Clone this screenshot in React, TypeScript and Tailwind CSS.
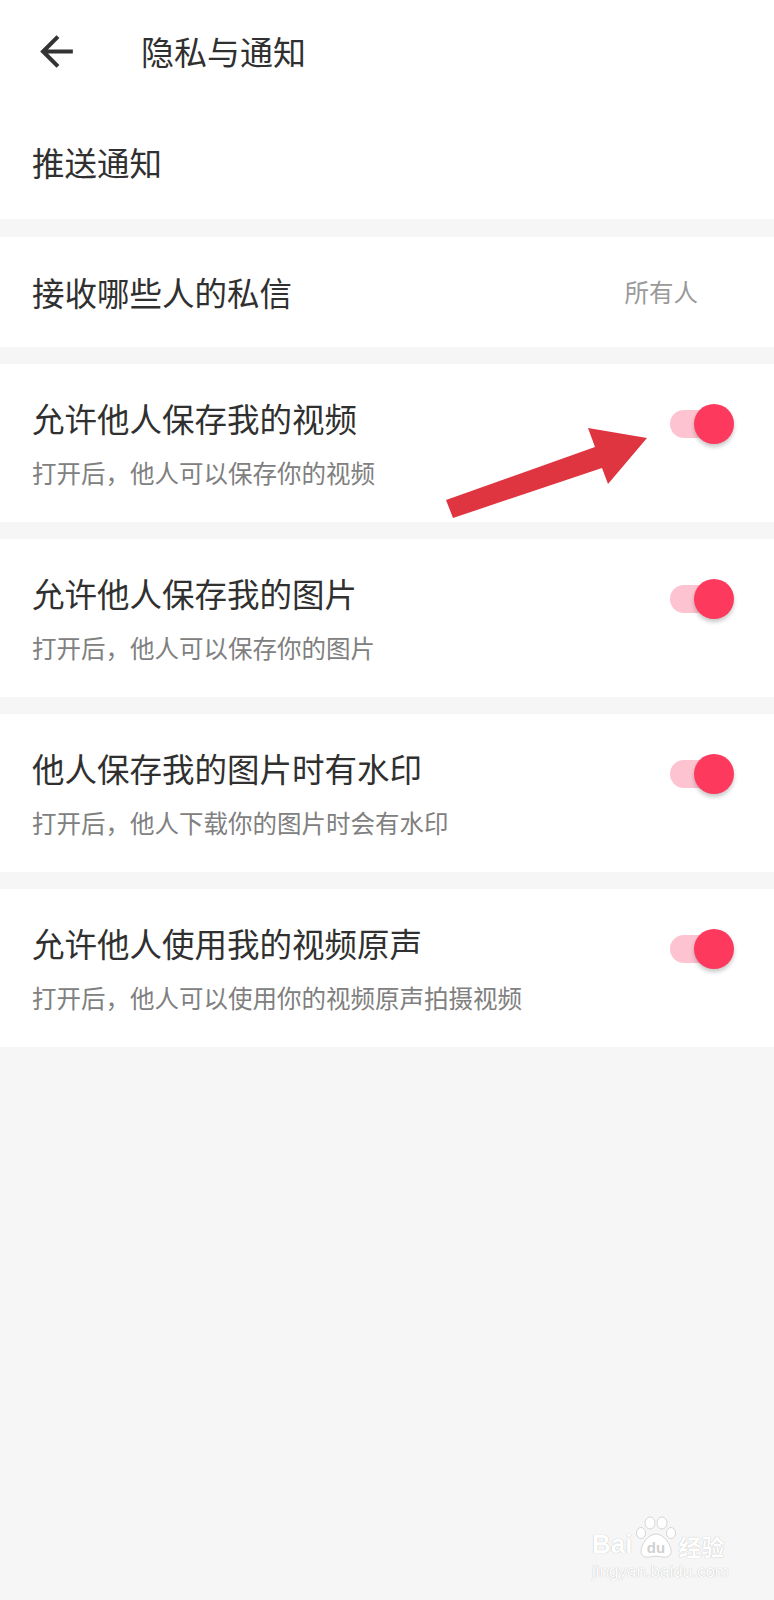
import React from 'react';

const font = { fontFamily: '"Noto Sans CJK SC", "Noto Sans", sans-serif' };
const latin = { fontFamily: '"Liberation Sans", Arial, sans-serif' };

const toggleRows = [
  { title: '允许他人保存我的视频', desc: '打开后，他人可以保存你的视频' },
  { title: '允许他人保存我的图片', desc: '打开后，他人可以保存你的图片' },
  { title: '他人保存我的图片时有水印', desc: '打开后，他人下载你的图片时会有水印' },
  { title: '允许他人使用我的视频原声', desc: '打开后，他人可以使用你的视频原声拍摄视频' },
];

const Toggle = () => (
  <div className="relative mt-[40px] mr-[40px] h-[40px] w-[64px] shrink-0">
    <div className="absolute left-0 top-[6px] h-[28px] w-[52px] rounded-full bg-[#fdc3d0]" />
    <div className="absolute right-0 top-0 h-[40px] w-[40px] rounded-full bg-[#fd3a5e] shadow-[0_3px_4px_rgba(0,0,0,0.22)]" />
  </div>
);

const Gap = ({ h }: { h: string }) => <div className={`${h} w-full`} />;

const App = () => {
  return (
    <div className="relative min-h-[1600px] w-full bg-[#f6f6f6]" style={font}>
      {/* header + push notifications */}
      <div className="bg-white">
        <div className="flex h-[102px] items-center">
          <svg className="ml-[32px]" width="49" height="49" viewBox="0 0 24 24" fill="#333">
            <path d="M20 11H7.83l5.59-5.59L12 4l-8 8 8 8 1.41-1.41L7.83 13H20v-2z" />
          </svg>
          <h1 className="ml-[60px] text-[33px] font-normal leading-[40px] text-[#303030]">隐私与通知</h1>
        </div>
        <div className="flex h-[117px] items-center pb-[2px] pl-[32px] pt-[4px]">
          <span className="text-[32.5px] leading-[40px] text-[#303030]">推送通知</span>
        </div>
      </div>

      <Gap h="h-[18px]" />

      <div className="flex h-[110px] items-center justify-between bg-white pl-[32px] pr-[76px]">
        <span className="text-[32.5px] leading-[40px] text-[#303030]">接收哪些人的私信</span>
        <span className="text-[24.5px] leading-[30px] text-[#9a9a9a]">所有人</span>
      </div>

      {toggleRows.map(row => (
        <div key={row.title}>
          <Gap h="h-[17px]" />
          <div className="flex h-[158px] justify-between bg-white">
            <div className="flex flex-col pl-[32px] pt-[34px]">
              <span className="text-[32.5px] leading-[40px] text-[#303030]">{row.title}</span>
              <span className="mt-[20px] text-[24.5px] leading-[30px] text-[#808080]">{row.desc}</span>
            </div>
            <Toggle />
          </div>
        </div>
      ))}

      {/* annotation arrow */}
      <svg className="pointer-events-none absolute left-0 top-0" width="774" height="600">
        <polygon
          points="446,500 595,447 588,428 647,438 608,484 602,468 453,518"
          fill="#df3540"
        />
      </svg>

      {/* watermark */}
      <div className="pointer-events-none absolute left-[592px] top-[1516px] flex flex-col items-start">
        <div className="flex items-end">
          <span
            className="mb-[5px] text-[26px] font-bold leading-[22px] text-white [text-shadow:0_0_1px_rgba(0,0,0,0.3)]"
            style={latin}
          >
            Bai
          </span>
          <svg width="44" height="44" viewBox="0 0 44 44" className="ml-[2px]">
            <g fill="#fff" stroke="#d6d6d6" strokeWidth="1">
              <ellipse cx="16" cy="7" rx="5" ry="6" />
              <ellipse cx="28" cy="7" rx="5" ry="6" />
              <ellipse cx="7" cy="17" rx="4.5" ry="5.5" />
              <ellipse cx="37" cy="17" rx="4.5" ry="5.5" />
              <path d="M22 18 C14 18 8 28 7 34 C6 40 12 42 16 41 C19 40 25 40 28 41 C33 42 38 40 37 34 C36 28 30 18 22 18 Z" />
            </g>
            <text x="22" y="37" textAnchor="middle" fontSize="15" fontWeight="bold" fill="#d0d0d0" style={latin}>
              du
            </text>
          </svg>
          <span className="mb-[2px] text-[23px] font-bold leading-[24px] text-white [text-shadow:0_0_1px_rgba(0,0,0,0.3)]">
            经验
          </span>
        </div>
        <span
          className="mt-[3px] text-[17px] leading-[18px] text-white [text-shadow:0_0_1px_rgba(0,0,0,0.3)]"
          style={latin}
        >
          jingyan.baidu.com
        </span>
      </div>
    </div>
  );
};

export default App;
